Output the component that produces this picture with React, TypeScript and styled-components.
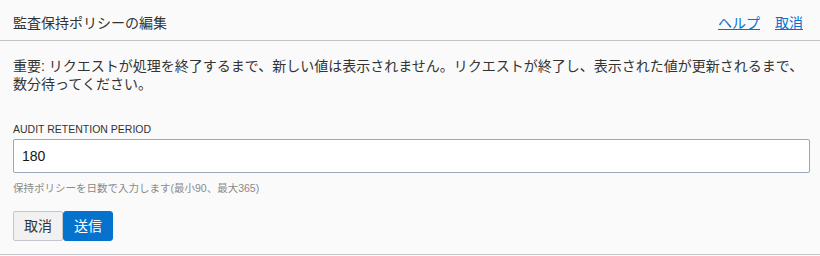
import styled, { createGlobalStyle } from 'styled-components';

const GlobalStyle = createGlobalStyle`
  * {
    box-sizing: border-box;
  }
  body {
    margin: 0;
    background: #fafafa;
    font-family: "Liberation Sans", "Noto Sans CJK JP", sans-serif;
    color: #333333;
  }
`

const Panel = styled.section`
  width: 820px;
  height: 255px;
  background: #fafafa;
  border-bottom: 1px solid #c4c7cb;
  display: flex;
  flex-direction: column;
`

const Header = styled.header`
  height: 41px;
  padding: 14px 17px 0 13px;
  border-bottom: 1px solid #c0c4c9;
  display: flex;
  justify-content: space-between;
  align-items: flex-start;
`

const Title = styled.h1`
  margin: 0;
  font-size: 14px;
  font-weight: normal;
  line-height: 18px;
  color: #333333;
`

const HeaderLinks = styled.nav`
  display: flex;
  gap: 15px;
`

const Link = styled.a`
  font-size: 14px;
  line-height: 18px;
  color: #0572ce;
  text-decoration: underline;
  cursor: pointer;
`

const Body = styled.div`
  padding: 16px 10px 13px 13px;
  display: flex;
  flex-direction: column;
`

const Notice = styled.p`
  margin: 0;
  font-size: 14px;
  line-height: 18px;
  color: #333333;
`

const Field = styled.div`
  margin-top: 30px;
  display: flex;
  flex-direction: column;
`

const Label = styled.label`
  font-size: 10.5px;
  line-height: 13px;
  color: #333333;
  text-transform: uppercase;
`

const Input = styled.input`
  margin-top: 3px;
  width: 100%;
  height: 34px;
  padding: 0 8px;
  border: 1px solid #9aa7b8;
  border-radius: 2px;
  background: #ffffff;
  font-family: "Liberation Sans", "Noto Sans CJK JP", sans-serif;
  font-size: 14px;
  color: #161513;
  outline: none;
`

const Hint = styled.div`
  margin-top: 8px;
  font-size: 10.5px;
  line-height: 14px;
  color: #8a8a8a;
`

const Actions = styled.div`
  margin-top: 16px;
  display: flex;
`

const Button = styled.button<{ $primary?: boolean }>`
  height: 30px;
  padding: 0 10px;
  border: 1px solid ${p => (p.$primary ? '#0572ce' : '#c4c6ca')};
  border-radius: ${p => (p.$primary ? '3px' : '2px')};
  background: ${p => (p.$primary ? '#0572ce' : '#f1f1f1')};
  color: ${p => (p.$primary ? '#ffffff' : '#333333')};
  font-family: "Liberation Sans", "Noto Sans CJK JP", sans-serif;
  font-size: 14px;
  line-height: 18px;
  cursor: pointer;
`

export default function App() {
  return (
    <>
      <GlobalStyle />
      <Panel>
        <Header>
          <Title>監査保持ポリシーの編集</Title>
          <HeaderLinks>
            <Link>ヘルプ</Link>
            <Link>取消</Link>
          </HeaderLinks>
        </Header>
        <Body>
          <Notice>
            重要: リクエストが処理を終了するまで、新しい値は表示されません。リクエストが終了し、表示された値が更新されるまで、数分待ってください。
          </Notice>
          <Field>
            <Label htmlFor="retention">Audit Retention Period</Label>
            <Input id="retention" defaultValue="180" />
            <Hint>保持ポリシーを日数で入力します(最小90、最大365)</Hint>
          </Field>
          <Actions>
            <Button>取消</Button>
            <Button $primary>送信</Button>
          </Actions>
        </Body>
      </Panel>
    </>
  )
}
